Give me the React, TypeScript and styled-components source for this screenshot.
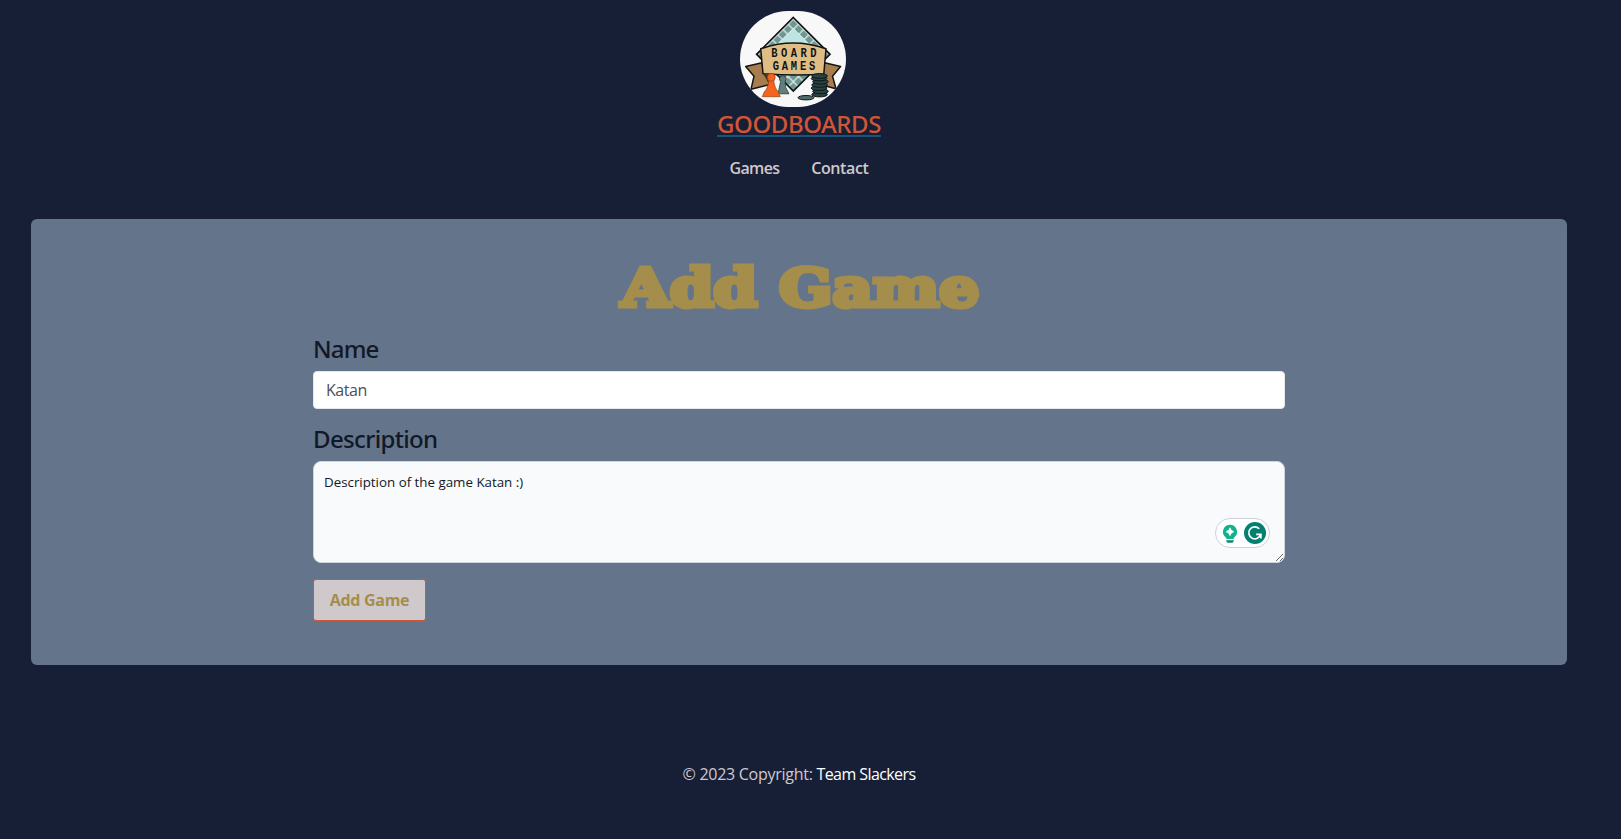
import React from 'react';
import styled, { createGlobalStyle } from 'styled-components';

const GlobalStyle = createGlobalStyle`
  *, *::before, *::after { box-sizing: border-box; }
  body {
    margin: 0;
    background: #171f37;
    font-family: 'Open Sans', 'Noto Sans', sans-serif;
    font-size: 16px;
    line-height: 24px;
    color: #cfc9cb;
  }
`;

const Page = styled.div`
  width: 1598px;
  min-height: 839px;
  display: flex;
  flex-direction: column;
`;

const Header = styled.header`
  height: 219px;
  padding-top: 11px;
  display: flex;
  flex-direction: column;
  align-items: center;
`;

const Logo = styled.svg`
  display: block;
  width: 106px;
  height: 96px;
  margin-right: 12px;
  border-radius: 50px;
  flex: none;
`;

const Brand = styled.a`
  margin-top: -1px;
  font-family: 'Noto Sans', sans-serif;
  font-size: 24px;
  font-weight: 500;
  line-height: 36px;
  letter-spacing: -0.45px;
  color: #cf5637;
  text-decoration: underline 2px #17557c;
  text-underline-offset: 2px;
  text-decoration-skip-ink: none;
`;

const Nav = styled.nav`
  display: flex;
  gap: 32px;
  margin-top: 14px;
`;

const NavLink = styled.a<{ $tracking: number }>`
  font-weight: 600;
  letter-spacing: ${(p) => p.$tracking}px;
`;

const Card = styled.main`
  height: 446px;
  margin: 0 31px;
  padding: 28px 282px 0;
  border-radius: 6px;
  background: #64748b;
`;

const Title = styled.h1`
  margin: 0;
  height: 84px;
  line-height: 80px;
  padding-left: 2px;
  text-align: center;
  font-family: 'DejaVu Serif', serif;
  font-size: 53px;
  font-weight: 700;
  color: #a58d4b;
  -webkit-text-stroke: 5px #a58d4b;
  transform: scaleX(1.18);
`;

const Form = styled.form`
  display: flex;
  flex-direction: column;
  align-items: flex-start;
`;

const Label = styled.label<{ $tracking: number }>`
  font-family: 'Noto Sans', sans-serif;
  font-size: 24px;
  font-weight: 500;
  line-height: 36px;
  letter-spacing: ${(p) => p.$tracking}px;
  color: #111827;
`;

const Input = styled.input`
  width: 100%;
  height: 38px;
  margin: 4px 0 12px;
  padding: 0 12px;
  border: 1px solid #e5e7eb;
  border-radius: 4px;
  background: #fff;
  color: #495057;
  font: inherit;
  letter-spacing: -0.45px;
`;

const AreaWrap = styled.div`
  position: relative;
  width: 100%;
  height: 102px;
  margin: 4px 0 16px;
`;

const Area = styled.textarea`
  display: block;
  width: 100%;
  height: 102px;
  padding: 10px;
  border: 1px solid #d1d5db;
  border-radius: 8px;
  background: #f9fafb;
  color: #111827;
  font-family: inherit;
  font-size: 13.333px;
  line-height: 20px;
  resize: vertical;
`;

const Assistant = styled.div`
  position: absolute;
  right: 15px;
  bottom: 15px;
  width: 55px;
  height: 30px;
  border: 1px solid #cdcfdf;
  border-radius: 15px;
  background: #fff;
  svg { display: block; }
`;

const Button = styled.button`
  width: 113px;
  height: 42px;
  padding: 0;
  border: 1px solid #cf5637;
  border-radius: 3px;
  background: #cfc9cb;
  color: #a58d4b;
  font: 700 16px/24px 'Open Sans', sans-serif;
  letter-spacing: -0.3px;
`;

const Footer = styled.footer`
  padding-top: 97px;
  text-align: center;
`;

const Copy = styled.span`
  letter-spacing: -0.27px;
`;

const Team = styled.a`
  color: #fff;
  letter-spacing: -0.58px;
`;

function GameLogo() {
  return (
    <Logo viewBox="0 0 106 96" role="img" aria-label="Board Games">
      <defs>
        <pattern id="checks" width="7.4" height="7.4" patternUnits="userSpaceOnUse" patternTransform="translate(53.3 8) rotate(45)">
          <rect width="7.4" height="7.4" fill="#dcecea" />
          <rect x="0.6" y="0.6" width="6.1" height="6.1" fill="#6f9692" />
        </pattern>
      </defs>
      <rect width="106" height="96" fill="#f8f8f8" />
      <path d="M53.3 6.5 90 43.3 53.3 80 16.6 43.3Z" fill="url(#checks)" stroke="#101214" strokeWidth="1.7" />
      <path d="M53.3 17.5 70 34H36.6Z" fill="#bde4e1" stroke="#e4f3f2" strokeWidth="0.8" />
      <g stroke="#161311" strokeWidth="1.5" strokeLinejoin="round">
        <path d="M22 51.8 5.7 55.5 14 65.2 11 78.3 30 73.5 24 61Z" fill="#a77d50" />
        <path d="M84.6 51.8 100.6 55.5 92.5 65.2 96 77.8 80 73.5 83 61Z" fill="#a77d50" />
        <path d="M20.7 37.8Q53.3 26 86 37.8L83.8 63.3Q53.3 65 23 62.7Z" fill="#e0bd85" />
      </g>
      <path d="M23 62.7 30.5 64 29 72Z" fill="#4b321d" />
      <g fill="#121212" fontFamily="'Liberation Mono', monospace" fontWeight="700" fontSize="13.4" transform="scale(0.78 1)">
        <text x="40" y="46.3" textLength="58" lengthAdjust="spacing">BOARD</text>
        <text x="42" y="58.8" textLength="54.5" lengthAdjust="spacing">GAMES</text>
      </g>
      <path d="M40.6 70.5A3.3 3.3 0 1 1 45 70.5Q44.4 76 49 82.8H38Z" fill="#607f7d" stroke="#263c3a" strokeWidth="0.8" />
      <g fill="#f5641e" stroke="#9b411a" strokeWidth="0.7">
        <path d="M29 69H33.6Q34.6 77.5 38.4 81L40.3 85.7H22.3L24.2 81Q28 77.5 29 69Z" />
        <circle cx="31.3" cy="66.4" r="3.9" />
      </g>
      <g fill="#294342" stroke="#0c1819" strokeWidth="1">
        {[83.5, 80.3, 77.1, 73.9, 70.7, 67.5, 65].map((y, i) => (
          <ellipse key={y} cx={79.6 + (i % 3 === 1 ? 0.9 : i % 3 === 2 ? -0.6 : 0)} cy={y} rx="7.8" ry="2.4" />
        ))}
        <ellipse cx="66" cy="86.7" rx="8" ry="2.2" fill="#4f6d6b" />
      </g>
    </Logo>
  );
}

function AssistantIcons() {
  return (
    <svg width="53" height="28" viewBox="0 0 53 28">
      <path d="M14 5.8a7 7 0 0 1 4.2 12.6L17.4 20H10.6l-.8-1.6A7 7 0 0 1 14 5.8Z" fill="#12b28c" />
      <path d="M14 8.8q.7 3.2 3.8 3.9-3.1.7-3.8 3.9-.7-3.2-3.8-3.9 3.1-.7 3.8-3.9Z" fill="#fff" stroke="#fff" strokeWidth="0.8" />
      <path d="M10.3 21.2h7.4v.7a1.8 1.8 0 0 1-1.8 1.8h-3.8a1.8 1.8 0 0 1-1.8-1.8Z" fill="#08866f" />
      <circle cx="39" cy="14" r="11" fill="#048071" />
      <path d="M43.2 9.8A6 6 0 1 0 44.6 15.3H40.2M44.9 14.8V19.5" fill="none" stroke="#fff" strokeWidth="1.7" />
    </svg>
  );
}

export default function App() {
  return (
    <>
      <GlobalStyle />
      <Page>
        <Header>
          <GameLogo />
          <Brand>GOODBOARDS</Brand>
          <Nav>
            <NavLink $tracking={-0.7}>Games</NavLink>
            <NavLink $tracking={-0.4}>Contact</NavLink>
          </Nav>
        </Header>
        <Card>
          <Title>Add Game</Title>
          <Form>
            <Label htmlFor="name" $tracking={-0.85}>Name</Label>
            <Input id="name" defaultValue="Katan" />
            <Label htmlFor="description" $tracking={-0.65}>Description</Label>
            <AreaWrap>
              <Area id="description" defaultValue="Description of the game Katan :)" />
              <Assistant>
                <AssistantIcons />
              </Assistant>
            </AreaWrap>
            <Button type="button">Add Game</Button>
          </Form>
        </Card>
        <Footer>
          <Copy>© 2023 Copyright: </Copy>
          <Team>Team Slackers</Team>
        </Footer>
      </Page>
    </>
  );
}
